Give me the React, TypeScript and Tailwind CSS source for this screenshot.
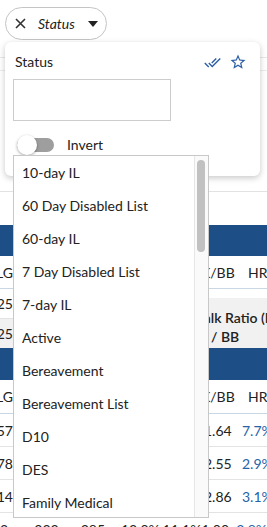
import React from 'react';
import { MdDoneAll, MdStarBorder } from 'react-icons/md';

const statuses = [
  '10-day IL',
  '60 Day Disabled List',
  '60-day IL',
  '7 Day Disabled List',
  '7-day IL',
  'Active',
  'Bereavement',
  'Bereavement List',
  'D10',
  'DES',
  'Family Medical',
];

const dataRows = [
  { left: '.257', kbb: '1.64', hrs: '7.7%' },
  { left: '.278', kbb: '2.55', hrs: '2.9%' },
  { left: '.314', kbb: '2.86', hrs: '3.1%' },
];

const HeaderRow = ({ tall }: { tall?: boolean }) => (
  <div
    className={`${tall ? 'h-[34px]' : 'h-[33px]'} flex items-center border-b border-[#c9d6e4] text-[14px] text-[#222]`}
  >
    <div className="w-[13px] overflow-hidden flex justify-end whitespace-nowrap">SLG</div>
    <div className="flex-1" />
    <div className="w-[47px] whitespace-nowrap">K/BB</div>
    <div className="w-[19px] overflow-hidden whitespace-nowrap">HRS%</div>
  </div>
);

export default function App() {
  return (
    <div className="relative w-[267px] h-[527px] overflow-hidden bg-white font-['Lato',sans-serif] text-[#222]">
      {/* Background page */}
      <div className="pt-[7px] pl-[5px]">
        <div className="h-[33px] w-[102px] rounded-full border border-[#c4c4c4] flex items-center pl-[9px]">
          <svg width="11" height="11" viewBox="0 0 11 11" className="text-[#333]">
            <path d="M1 1L10 10M10 1L1 10" stroke="currentColor" strokeWidth="1.6" />
          </svg>
          <span className="ml-[12px] italic text-[14px] text-[#222]">Status</span>
          <svg width="10" height="6" viewBox="0 0 10 6" className="ml-[13px]">
            <path d="M0 0H10L5 6Z" fill="#222" />
          </svg>
        </div>
      </div>
      <div className="h-[18px] border-b border-[#e8e8e8]" />
      <div className="h-[13px] border-b border-[#ececec]" />
      <div className="h-[121px] border-b border-[#e2e2e2]" />
      <div className="h-[33px]" />
      <div className="h-[31px] bg-[#1d4f86]" />
      <HeaderRow />

      <div className="flex h-[59px] text-[14px] text-[#222]">
        <div className="w-[13px] flex flex-col">
          <div className="h-[30px] flex items-center justify-end overflow-hidden border-b border-[#e3e3e3] whitespace-nowrap">.325</div>
          <div className="h-[29px] flex items-center justify-end overflow-hidden bg-[#f1f1f1] whitespace-nowrap">.325</div>
        </div>
        <div className="flex-1" />
        <div className="w-[80px] pt-[9px] overflow-hidden">
          <div className="h-[50px] bg-[#f1f1f1] font-semibold leading-[19px] pt-[10px] whitespace-nowrap">
            <div className="ml-[3px]">Walk Ratio (K</div>
            <div className="ml-[24px]">/ BB</div>
          </div>
        </div>
      </div>

      <div className="h-[32px] bg-[#1d4f86]" />
      <HeaderRow tall />
      {dataRows.map((r) => (
        <div key={r.left} className="h-[33px] flex items-center border-b border-[#e3e3e3] text-[14px] text-[#222]">
          <div className="w-[13px] overflow-hidden flex justify-end whitespace-nowrap">{r.left}</div>
          <div className="flex-1" />
          <div className="w-[38px] whitespace-nowrap">{r.kbb}</div>
          <div className="w-[25px] overflow-hidden whitespace-nowrap text-[#2763a8]">{r.hrs}</div>
        </div>
      ))}
      <div className="h-[33px] flex items-center text-[14px] text-[#222] whitespace-nowrap">
        <div className="w-[32px]">3</div>
        <div className="w-[48px]">.333</div>
        <div className="w-[45px]">.385</div>
        <div className="w-[43px]">13.0%</div>
        <div className="w-[39px]">11.1%</div>
        <div className="w-[36px]">1.00</div>
        <div className="text-[#2763a8]">3.8%</div>
      </div>

      {/* Filter popover */}
      <div className="absolute left-[5px] top-[42px] w-[255px] h-[134px] bg-white rounded-[6px] shadow-[0_2px_6px_rgba(0,0,0,0.22)]">
        <div className="flex items-center justify-between pl-[10px] pr-[13px] pt-[11px]">
          <span className="text-[14px] leading-[18px]">Status</span>
          <div className="flex items-center gap-[8px] text-[#2d5fa6]">
            <MdDoneAll size={17} />
            <MdStarBorder size={18} />
          </div>
        </div>
        <div className="ml-[8px] mt-[8px] w-[158px] h-[42px] border border-[#cccccc]" />
        <div className="flex items-center ml-[12px] mt-[13px]">
          <div className="relative w-[37px] h-[20px] flex items-center">
            <div className="w-[37px] h-[14px] rounded-full bg-[#9e9e9e]" />
            <div className="absolute left-0 top-0 w-[20px] h-[20px] rounded-full bg-white shadow-[0_1px_3px_rgba(0,0,0,0.35)]" />
          </div>
          <span className="ml-[13px] text-[14px]">Invert</span>
        </div>
      </div>

      {/* Status options list */}
      <div className="absolute left-[13px] top-[155px] w-[196px] h-[363px] bg-white border border-[#c8c8c8] flex">
        <div className="flex-1 flex flex-col">
          {statuses.map((s) => (
            <div key={s} className="h-[33px] shrink-0 flex items-center pl-[8px] text-[14px] text-[#222] whitespace-nowrap">
              {s}
            </div>
          ))}
        </div>
        <div className="w-[14px] border-l border-[#e6e6e6] bg-[#fafafa]">
          <div className="mt-[4px] ml-[2px] w-[8px] h-[92px] rounded-full bg-[#c1c1c1]" />
        </div>
      </div>
    </div>
  );
}
